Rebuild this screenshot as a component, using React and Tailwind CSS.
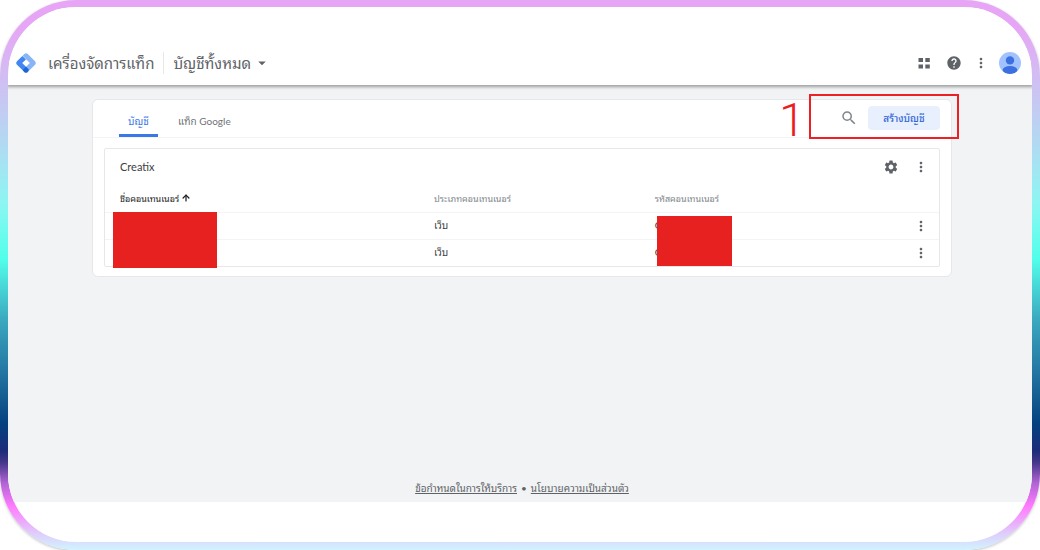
import { ArrowUp } from "lucide-react";
import {
  MdArrowDropDown,
  MdHelp,
  MdMoreVert,
  MdSearch,
  MdSettings,
} from "react-icons/md";

const containers = [
  { id: 1, type: "เว็บ", code: "GTM" },
  { id: 2, type: "เว็บ", code: "GTM" },
];

function TagManagerLogo() {
  return (
    <svg viewBox="0 0 20 20" className="h-5 w-5" aria-hidden="true">
      <path
        d="M10 0.2Q11 0.2 11.8 1L19 8.2Q20.6 10 19 11.8L11.8 19 8.4 15.6 13.8 10 6.6 2.8 8.4 1Q9.2 0.2 10 0.2z"
        fill="#8ab4f8"
      />
      <path
        d="M6.4 3L10 6.4 6.2 10 11.8 15.6 8.4 19 1 11.8Q-0.6 10 1 8.2z"
        fill="#4285f4"
      />
      <path d="M10 13.8 13 16.8 11.6 19.2Q10 20.4 8.4 19.2L6.8 17z" fill="#1967d2" />
    </svg>
  );
}

function Avatar() {
  return (
    <svg viewBox="0 0 22 22" className="h-[22px] w-[22px]" aria-hidden="true">
      <clipPath id="avatar-clip">
        <circle cx="11" cy="11" r="11" />
      </clipPath>
      <g clipPath="url(#avatar-clip)">
        <rect width="22" height="22" fill="#a0c3ff" />
        <circle cx="11" cy="8.4" r="4.2" fill="#3c6fe0" />
        <ellipse cx="11" cy="18" rx="7.4" ry="4" fill="#3c6fe0" />
      </g>
    </svg>
  );
}

function Header() {
  return (
    <header className="relative flex items-center justify-between bg-white pt-10 pr-[11px] pb-1.5 pl-2 shadow-[0_1px_3px_1px_rgba(0,0,0,0.35)]">
      <div className="flex h-8 items-center text-[#5f6368]">
        <TagManagerLogo />
        <h1 className="ml-3 text-[15px] leading-8">เครื่องจัดการแท็ก</h1>
        <span className="mx-[9px] h-[22px] w-px bg-gray-200"></span>
        <button className="flex items-center gap-0.5 text-[15px] leading-8">
          บัญชีทั้งหมด
          <MdArrowDropDown className="h-[18px] w-[18px]" />
        </button>
      </div>

      <div className="flex items-center text-[#5f6368]">
        <button aria-label="แอป">
          <svg viewBox="0 0 12 12" className="h-3 w-3" fill="currentColor">
            <path d="M0.5 1H5v4H0.5zM7.3 1h4.5v4H7.3zM0.5 7.5H5v4H0.5zM7.3 7.5h4.5v4H7.3z" />
          </svg>
        </button>
        <button className="ml-4" aria-label="ความช่วยเหลือ">
          <MdHelp className="h-4 w-4" />
        </button>
        <button className="ml-[11px]" aria-label="เพิ่มเติม">
          <MdMoreVert className="h-4 w-4" />
        </button>
        <button className="ml-2.5" aria-label="โปรไฟล์">
          <Avatar />
        </button>
      </div>
    </header>
  );
}

function Toolbar() {
  return (
    <div className="flex items-start justify-between border-b border-gray-100 pr-[11px] pl-[26px]">
      <nav className="flex h-[37px] gap-5 text-[10px]">
        <a
          href="#accounts"
          className="flex w-[39px] items-center justify-center border-b-3 border-[#3b78e7] pt-2 text-[#3b78e7]"
        >
          บัญชี
        </a>
        <a
          href="#google-tags"
          className="flex items-center border-b-3 border-transparent pt-2 text-[#6f7377]"
        >
          แท็ก Google
        </a>
      </nav>

      <div className="relative mt-1.5 flex items-center gap-2.5">
        <button className="text-[#80868b]" aria-label="ค้นหา">
          <MdSearch className="h-[18px] w-[18px]" />
        </button>
        <button className="h-6 w-[72px] rounded-sm bg-[#e8f0fe] text-[10px] font-medium text-[#3367d6]">
          สร้างบัญชี
        </button>
        {/* step marker */}
        <div className="pointer-events-none absolute -top-3 -right-[19px] h-[45px] w-[150px] border-2 border-[#ed2024]">
          <span className="absolute -top-2 right-[152px] font-[Roboto,Arial,sans-serif] text-[47px] leading-[64px] font-light text-[#ed1c24]">
            1
          </span>
        </div>
      </div>
    </div>
  );
}

function ContainerTable() {
  return (
    <div className="relative">
      <table className="w-full table-fixed text-left">
        <colgroup>
          <col className="w-[38%]" />
          <col className="w-[26%]" />
          <col />
          <col className="w-10" />
        </colgroup>
        <thead>
          <tr className="h-[27px] border-b border-gray-100 text-[9px] text-[#80868b]">
            <th className="py-0 pl-[15px] font-normal text-[#202124]">
              <span className="flex items-center gap-0.5">
                ชื่อคอนเทนเนอร์
                <ArrowUp className="h-2.5 w-2.5" strokeWidth={3} />
              </span>
            </th>
            <th className="py-0 pl-3 font-normal">ประเภทคอนเทนเนอร์</th>
            <th className="py-0 pl-4 font-normal">รหัสคอนเทนเนอร์</th>
            <th></th>
          </tr>
        </thead>
        <tbody className="text-[10px] text-[#3c4043]">
          {containers.map((container) => (
            <tr
              key={container.id}
              className="h-[27px] border-b border-gray-100 last:border-b-0"
            >
              <td></td>
              <td className="py-0 pl-3">{container.type}</td>
              <td className="py-0 pl-4">{container.code}</td>
              <td className="py-0 pl-3.5">
                <button
                  className="flex text-[#5f6368]"
                  aria-label="ตัวเลือก"
                >
                  <MdMoreVert className="h-4 w-4" />
                </button>
              </td>
            </tr>
          ))}
        </tbody>
      </table>

      {/* hidden names and ids */}
      <div className="absolute -bottom-0.5 left-2 h-14 w-[104px] bg-[#e72020]"></div>
      <div className="absolute right-[207px] bottom-0 h-[50px] w-[75px] bg-[#e72020]"></div>
    </div>
  );
}

function AccountCard() {
  return (
    <section className="mx-[11px] mt-2.5 mb-[9px] rounded-xs border border-gray-200">
      <div className="flex h-9 items-center justify-between pr-2.5 pl-[15px]">
        <h2 className="text-[11px] text-[#3c4043]">Creatix</h2>
        <div className="flex items-center gap-3.5 text-[#5f6368]">
          <button aria-label="การตั้งค่า">
            <MdSettings className="h-4 w-4" />
          </button>
          <button aria-label="ตัวเลือก">
            <MdMoreVert className="h-4 w-4" />
          </button>
        </div>
      </div>
      <ContainerTable />
    </section>
  );
}

export default function App() {
  return (
    <div className="min-h-screen bg-white font-[Lato,'Noto_Sans_Thai_Looped',Loma,Waree,'Noto_Sans',sans-serif]">
      <div className="flex min-h-screen rounded-[76px] bg-[linear-gradient(to_bottom,#e6a6f5_0%,#e6a6f5_5%,#cfc0f3_15%,#b3d9f2_26%,#8cf6f2_37%,#52ffea_47%,#3ba9c0_58%,#2579a4_67%,#05427f_77%,#1d2b7a_82%,#423588_84%,#b565d8_88%,#ff7aff_92%,#dfcdfb_97%,#d0f4ff_100%)] px-2 pt-[7px] pb-2 shadow-[0_1px_3px_rgba(0,0,0,0.25)]">
        <div className="flex flex-1 flex-col overflow-hidden rounded-[68px] bg-white">
          <Header />
          <main className="mb-10 flex flex-1 flex-col justify-between bg-[#f1f3f4] pt-[14px] pr-20 pb-1.5 pl-[84px]">
            <div className="rounded-md border border-gray-200 bg-white">
              <Toolbar />
              <AccountCard />
            </div>
            <footer className="flex justify-center gap-1 text-[10px] leading-4 text-[#5f6368]">
              <a href="#terms" className="underline">
                ข้อกำหนดในการให้บริการ
              </a>
              <span>•</span>
              <a href="#privacy" className="underline">
                นโยบายความเป็นส่วนตัว
              </a>
            </footer>
          </main>
        </div>
      </div>
    </div>
  );
}
